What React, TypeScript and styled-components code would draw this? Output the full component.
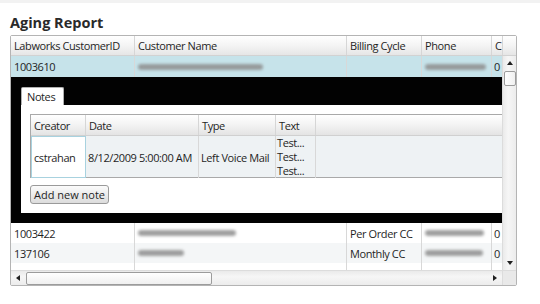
import React from "react";
import styled, { createGlobalStyle } from "styled-components";

const GlobalStyle = createGlobalStyle`
  html, body {
    margin: 0;
    padding: 0;
    background: #ffffff;
    font-family: "Open Sans", "Noto Sans", sans-serif;
    color: #1f1f1f;
  }
`;

type Row = {
  id: string;
  nameBlur: number;
  billing: string;
  phoneBlur: number;
  c: string;
};

const rows: Row[] = [
  { id: "1003422", nameBlur: 98, billing: "Per Order CC", phoneBlur: 59, c: "0" },
  { id: "137106", nameBlur: 46, billing: "Monthly CC", phoneBlur: 58, c: "0" },
  { id: "", nameBlur: 0, billing: "", phoneBlur: 0, c: "" },
];

const cols = "124px 212px 75px 70px 11px";

export default function App() {
  return (
    <>
      <GlobalStyle />
      <Page>
        <TopBand />
        <Title>Aging Report</Title>
        <Grid>
          <Header>
            <HeadCell>Labworks CustomerID</HeadCell>
            <HeadCell>Customer Name</HeadCell>
            <HeadCell>Billing Cycle</HeadCell>
            <HeadCell>Phone</HeadCell>
            <HeadCell>C</HeadCell>
            <HeadCell $last />
          </Header>
          <Body>
            <Content>
              <DataRow $selected>
                <Cell>1003610</Cell>
                <Cell>
                  <Blur $w={125} />
                </Cell>
                <Cell />
                <Cell>
                  <Blur $w={61} />
                </Cell>
                <Cell>0</Cell>
              </DataRow>
              <Details>
                <Tab>Notes</Tab>
                <TabPanel>
                  <NotesGrid>
                    <NotesHeader>
                      <NoteHead>Creator</NoteHead>
                      <NoteHead>Date</NoteHead>
                      <NoteHead>Type</NoteHead>
                      <NoteHead>Text</NoteHead>
                      <NoteHead $last />
                    </NotesHeader>
                    <NotesRow>
                      <NoteCell $current>cstrahan</NoteCell>
                      <NoteCell>8/12/2009 5:00:00 AM</NoteCell>
                      <NoteCell>Left Voice Mail</NoteCell>
                      <TextCell>
                        <span>Test...</span>
                        <span>Test...</span>
                        <span>Test...</span>
                      </TextCell>
                      <NoteCell $last />
                    </NotesRow>
                  </NotesGrid>
                  <AddButton>Add new note</AddButton>
                </TabPanel>
              </Details>
              {rows.map((r, i) => (
                <DataRow key={i} $alt={i % 2 === 1}>
                  <Cell>{r.id}</Cell>
                  <Cell>{r.nameBlur > 0 && <Blur $w={r.nameBlur} />}</Cell>
                  <Cell>{r.billing}</Cell>
                  <Cell>{r.phoneBlur > 0 && <Blur $w={r.phoneBlur} />}</Cell>
                  <Cell>{r.c}</Cell>
                </DataRow>
              ))}
            </Content>
            <VScroll>
              <Arrow $dir="up" />
              <VThumb />
              <VTrack />
              <Arrow $dir="down" />
            </VScroll>
            <HScroll>
              <Arrow $dir="left" />
              <HThumb />
              <HTrack />
              <Arrow $dir="right" />
            </HScroll>
            <Corner />
          </Body>
        </Grid>
      </Page>
    </>
  );
}

const Page = styled.div`
  width: 540px;
  height: 304px;
  overflow: hidden;
  display: flex;
  flex-direction: column;
`;

const TopBand = styled.div`
  height: 3px;
  background: #f2f2f2;
`;

const Title = styled.h1`
  margin: 10px 0 0 10px;
  height: 22px;
  font-size: 14.5px;
  font-weight: 700;
  line-height: 20px;
  color: #2a2a2a;
`;

const Grid = styled.div`
  margin-left: 10px;
  width: 505px;
  border: 1px solid #b4b4b4;
  border-radius: 2px;
  font-size: 11px;
  letter-spacing: -0.4px;
  color: #1f1f1f;
`;

const Header = styled.div`
  display: grid;
  grid-template-columns: ${cols} 1fr;
  height: 19px;
  background: linear-gradient(#ffffff, #f4f4f4 50%, #e6e6e6);
  border-bottom: 1px solid #d2d2d2;
`;

const HeadCell = styled.div<{ $last?: boolean }>`
  display: flex;
  align-items: center;
  padding-left: 3px;
  white-space: nowrap;
  overflow: hidden;
  border-right: ${(p) => (p.$last ? "none" : "1px solid #d6d6d6")};
`;

const Body = styled.div`
  display: grid;
  grid-template-columns: 491px 14px;
  grid-template-rows: 214px 15px;
`;

const Content = styled.div`
  overflow: hidden;
`;

const DataRow = styled.div<{ $selected?: boolean; $alt?: boolean }>`
  display: grid;
  grid-template-columns: ${cols};
  height: ${(p) => (p.$selected ? "21px" : "20px")};
  background: ${(p) => (p.$selected ? "#c6e3ea" : p.$alt ? "#f4f6f7" : "#ffffff")};
`;

const Cell = styled.div`
  display: flex;
  align-items: center;
  padding-left: 3px;
  white-space: nowrap;
  overflow: hidden;
  color: #1f1f1f;
  border-right: 1px solid #d8d8d8;
  &:last-child {
    border-right: none;
    padding-left: 2px;
  }
`;

const Blur = styled.span<{ $w: number }>`
  display: block;
  width: ${(p) => p.$w}px;
  height: 6px;
  border-radius: 3px;
  background: #8e8e8e;
  filter: blur(1.5px);
  opacity: 0.85;
`;

const Details = styled.div`
  background: #020202;
  padding: 10px 0 10px 10px;
  display: flex;
  flex-direction: column;
  align-items: flex-start;
`;

const Tab = styled.div`
  height: 18px;
  box-sizing: border-box;
  padding: 0 0 0 5px;
  width: 43px;
  display: flex;
  align-items: center;
  background: #ffffff;
  border: 1px solid #b0b0b0;
  border-bottom: none;
  border-radius: 2px 2px 0 0;
`;

const TabPanel = styled.div`
  align-self: stretch;
  background: #ffffff;
  padding: 9px 0 9px 9px;
  display: flex;
  flex-direction: column;
  align-items: flex-start;
  gap: 7px;
`;

const NotesGrid = styled.div`
  align-self: stretch;
  border: 1px solid #a9a9a9;
  border-right: none;
`;

const noteCols = "55px 113px 77px 40px 1fr";

const NotesHeader = styled.div`
  display: grid;
  grid-template-columns: ${noteCols};
  height: 20px;
  background: linear-gradient(#ffffff, #f3f3f3 50%, #e4e4e4);
  border-bottom: 1px solid #d0d0d0;
`;

const NoteHead = styled(HeadCell)``;

const NotesRow = styled.div`
  display: grid;
  grid-template-columns: ${noteCols};
  height: 41px;
  background: #eef2f4;
`;

const NoteCell = styled.div<{ $current?: boolean; $last?: boolean }>`
  display: flex;
  align-items: center;
  padding-left: 2px;
  white-space: nowrap;
  overflow: hidden;
  box-sizing: border-box;
  background: ${(p) => (p.$current ? "#ffffff" : "transparent")};
  border: ${(p) => (p.$current ? "1px solid #a8d2df" : "none")};
  border-right: ${(p) =>
    p.$last ? "none" : p.$current ? "1px solid #a8d2df" : "1px solid #d8d8d8"};
`;

const TextCell = styled.div`
  display: flex;
  flex-direction: column;
  justify-content: center;
  padding-left: 1px;
  line-height: 14px;
  border-right: 1px solid #d8d8d8;
`;

const AddButton = styled.button`
  font: inherit;
  font-size: 11px;
  color: #1f1f1f;
  height: 19px;
  padding: 0 3px;
  border: 1px solid #9a9a9a;
  border-radius: 3px;
  background: linear-gradient(#fbfbfb, #ececec 50%, #dcdcdc);
`;

const VScroll = styled.div`
  grid-row: 1;
  grid-column: 2;
  display: flex;
  flex-direction: column;
  align-items: center;
  background: linear-gradient(90deg, #eaeaea, #f6f6f6 40%, #ececec);
  border-left: 1px solid #dcdcdc;
`;

const VThumb = styled.div`
  margin-top: 1px;
  width: 12px;
  height: 15px;
  box-sizing: border-box;
  border: 1px solid #9c9c9c;
  border-radius: 2px;
  background: linear-gradient(90deg, #ffffff, #f0f0f0);
`;

const VTrack = styled.div`
  flex: 1;
`;

const HScroll = styled.div`
  grid-row: 2;
  grid-column: 1;
  display: flex;
  align-items: center;
  background: linear-gradient(#eaeaea, #f6f6f6 40%, #ececec);
  border-top: 1px solid #dcdcdc;
`;

const HThumb = styled.div`
  margin-left: 1px;
  width: 186px;
  height: 13px;
  box-sizing: border-box;
  border: 1px solid #9c9c9c;
  border-radius: 2px;
  background: linear-gradient(#ffffff, #f0f0f0);
`;

const HTrack = styled.div`
  flex: 1;
`;

const Corner = styled.div`
  grid-row: 2;
  grid-column: 2;
  background: #e9e9e9;
  border-top: 1px solid #dcdcdc;
  border-left: 1px solid #dcdcdc;
`;

const arrowShape = {
  up: "border-left: 3px solid transparent; border-right: 3px solid transparent; border-bottom: 4px solid #202020;",
  down: "border-left: 3px solid transparent; border-right: 3px solid transparent; border-top: 4px solid #202020;",
  left: "border-top: 3px solid transparent; border-bottom: 3px solid transparent; border-right: 4px solid #202020;",
  right: "border-top: 3px solid transparent; border-bottom: 3px solid transparent; border-left: 4px solid #202020;",
};

const Arrow = styled.div<{ $dir: "up" | "down" | "left" | "right" }>`
  flex: none;
  width: 0;
  height: 0;
  margin: ${(p) => (p.$dir === "up" || p.$dir === "down" ? "5px 0" : "0 5px")};
  ${(p) => arrowShape[p.$dir]}
`;
